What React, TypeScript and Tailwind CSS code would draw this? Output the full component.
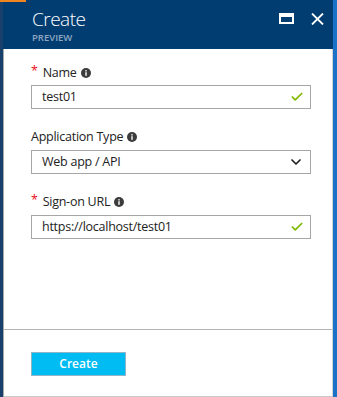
import { ChevronDown, Check } from "lucide-react"

function Info() {
  return (
    <svg width="10" height="10" viewBox="0 0 10 10" className="ml-[4px]">
      <circle cx="5" cy="5" r="5" fill="#3c3c3c" />
      <rect x="4.3" y="4.2" width="1.4" height="3.6" fill="#fff" />
      <rect x="4.3" y="2.1" width="1.4" height="1.4" fill="#fff" />
    </svg>
  )
}

function Label({ text, required }: { text: string; required?: boolean }) {
  return (
    <div className="flex items-center h-[16px] text-[12.5px] tracking-[-0.25px] text-[#222]">
      {required && <span className="text-[#e81123] mr-[5px] -mt-[3px]">*</span>}
      <span>{text}</span>
      <Info />
    </div>
  )
}

function Field({ value, select }: { value: string; select?: boolean }) {
  return (
    <div className="h-[24px] border border-[#a6a6a6] flex items-center justify-between pl-[10px] pr-[6px] text-[12.5px] tracking-[-0.25px] text-[#222]">
      <span>{value}</span>
      {select ? (
        <ChevronDown className="w-[16px] h-[16px] text-[#222]" strokeWidth={2.6} />
      ) : (
        <Check className="w-[14px] h-[14px] text-[#7fba00]" strokeWidth={3} />
      )}
    </div>
  )
}

export default function App() {
  return (
    <div
      className="relative w-[337px] h-[397px] flex bg-[#f0f0f0] overflow-hidden"
      style={{ fontFamily: '"Open Sans", "Noto Sans", sans-serif' }}
    >
      <div className="absolute top-0 left-0 w-[26px] h-[2px] bg-[#f0841e]" />
      <div className="w-[3px] bg-[#17406b]" />
      <div className="flex-1 flex flex-col">
        <div className="h-[49px] bg-[#023d71] flex justify-between pl-[29px] pr-[9px]">
          <div className="flex flex-col">
            <span className="text-white text-[19px] font-light leading-none mt-[10px] tracking-[-0.5px]">
              Create
            </span>
            <span className="text-[#8fa7c1] text-[9.5px] font-semibold leading-none mt-[4px]">
              PREVIEW
            </span>
          </div>
          <div className="flex items-start gap-[17px] mt-[13px]">
            <div className="w-[15px] h-[11px] border-2 border-t-[4px] border-white" />
            <svg width="13" height="12" viewBox="0 0 13 12">
              <path d="M1 0.5 L12 11.5 M12 0.5 L1 11.5" stroke="#fff" strokeWidth="1.8" />
            </svg>
          </div>
        </div>
        <div className="flex-1 bg-white border-l border-[#a8a8a8] border-r border-r-[#d4d4d4] border-b border-b-[#c8c8c8] flex flex-col">
          <div className="h-[280px] pl-[27px] pr-[21px] pt-[16px] flex flex-col">
            <Label text="Name" required />
            <div className="mt-[4px]">
              <Field value="test01" />
            </div>
            <div className="mt-[20px]">
              <Label text="Application Type" />
            </div>
            <div className="mt-[5px]">
              <Field value="Web app / API" select />
            </div>
            <div className="mt-[20px]">
              <Label text="Sign-on URL" required />
            </div>
            <div className="mt-[5px]">
              <Field value="https://localhost/test01" />
            </div>
          </div>
          <div className="border-t border-[#b4b4b4] flex-1 pl-[27px] pt-[22px]">
            <button className="w-[95px] h-[24px] bg-[#00bcf2] border border-[#8fb5c6] text-white text-[12px] font-semibold flex items-center justify-center">
              Create
            </button>
          </div>
        </div>
      </div>
      <div className="w-[4px] bg-[#1a73c6]" />
    </div>
  )
}
